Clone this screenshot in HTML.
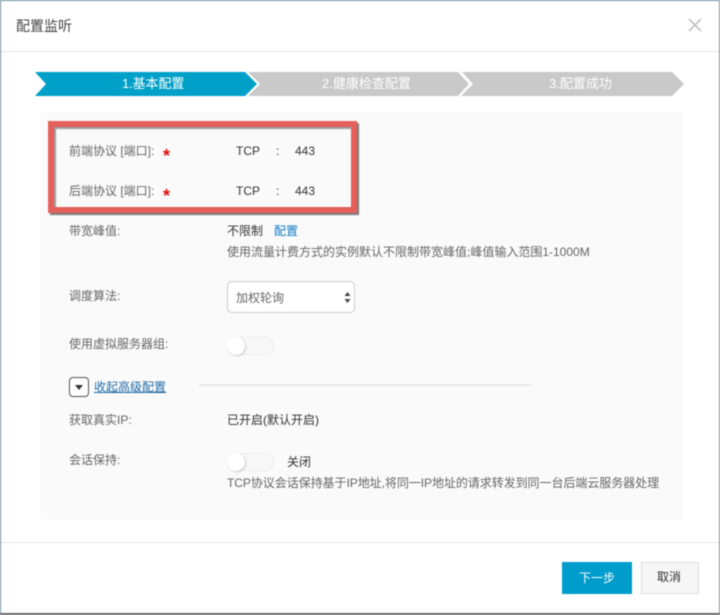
<!DOCTYPE html>
<html lang="zh">
<head>
<meta charset="utf-8">
<title>配置监听</title>
<style>
html,body{margin:0;padding:0;background:#fff}
#p{position:relative;width:720px;height:615px;overflow:hidden;background:#fff;font-family:"Liberation Sans","Noto Sans CJK SC",sans-serif;font-size:12px;color:#333;filter:blur(.4px)}
.t{position:absolute;white-space:nowrap;line-height:16px}
.a{position:absolute}
.l{color:#666;left:69px}
.v{color:#333}
.g{color:#666}
.s{color:#e01010;font-size:18px;font-weight:bold;line-height:20px;font-family:"Liberation Sans",sans-serif}
.sw{position:absolute;width:47px;height:18px;border:1px solid #eee;border-radius:10px;background:#f8f8f8;box-sizing:border-box}
.sw i{position:absolute;left:-1px;top:-1px;width:18px;height:18px;border-radius:50%;background:#fff;box-shadow:1px 1px 2px rgba(0,0,0,.18)}
</style>
</head>
<body>
<div id="p">
<div class="a" style="left:0;top:0;width:720px;height:1px;background:#5f8d9c"></div>
<div class="a" style="left:0;top:0;width:1px;height:615px;background:#6d8b96"></div>
<div class="a" style="right:0;top:0;width:1px;height:615px;background:#7f8f96"></div>
<div class="a" style="left:0;top:613px;width:720px;height:2px;background:#666"></div>
<div class="a" style="left:1px;top:51px;width:718px;height:1px;background:#e5e5e5"></div>
<div class="a" style="left:1px;top:542px;width:718px;height:1px;background:#e5e5e5"></div>
<div class="t" style="left:16px;top:17px;font-size:14px;line-height:18px;color:#444">配置监听</div>
<svg class="a" style="left:688px;top:18px" width="14" height="14" viewBox="0 0 14 14"><path d="M1 1L13 13M13 1L1 13" stroke="#c4c4c4" stroke-width="1.6" fill="none"/></svg>
<svg class="a" style="left:0;top:60px" width="720" height="48" viewBox="0 60 720 48">
<polygon points="35,72 245,72 257,84 245,96 35,96 46,84" fill="#00a0c8"/>
<polygon points="248,72 458,72 469,84 458,96 248,96 260,84" fill="#c9c9c9"/>
<polygon points="462,72 672,72 684,84 672,96 461,96 473,84" fill="#c9c9c9"/>
</svg>
<div class="t" style="left:122px;top:76px;color:#fff;font-size:13px;letter-spacing:-.1px">1.基本配置</div>
<div class="t" style="left:322px;top:76px;color:#fff;font-size:13px">2.健康检查配置</div>
<div class="t" style="left:549px;top:76px;color:#fff;font-size:13px">3.配置成功</div>
<div class="a" style="left:40px;top:112px;width:643px;height:408px;background:#fafafa"></div>
<div class="a" style="left:68px;top:513px;width:604px;height:1px;background:#f6f6f6"></div>
<div class="a" style="left:48px;top:121px;width:309px;height:92px;box-sizing:border-box;border:6.5px solid #e5605a;box-shadow:2px 2px 1px #777,inset 2px 2px 1px rgba(90,90,90,.6)"></div>
<div class="t l" style="top:143px">前端协议 [端口]:</div>
<div class="t s" style="left:163px;top:146px">*</div>
<div class="t v" style="left:236px;top:143px">TCP</div>
<div class="t v" style="left:276px;top:143px">:</div>
<div class="t v" style="left:295px;top:143px">443</div>
<div class="t l" style="top:183px">后端协议 [端口]:</div>
<div class="t s" style="left:163px;top:186px">*</div>
<div class="t v" style="left:236px;top:183px">TCP</div>
<div class="t v" style="left:276px;top:183px">:</div>
<div class="t v" style="left:295px;top:183px">443</div>
<div class="t l" style="top:223px">带宽峰值:</div>
<div class="t v" style="left:227px;top:223px">不限制</div>
<div class="t" style="left:274px;top:223px;color:#0a78c8">配置</div>
<div class="t g" style="left:227px;top:244px">使用流量计费方式的实例默认不限制带宽峰值;峰值输入范围1-1000M</div>
<div class="t l" style="top:288px">调度算法:</div>
<div class="a" style="left:227px;top:281px;width:128px;height:32px;box-sizing:border-box;border:1px solid #ccc;border-radius:5px;background:#fff"></div>
<div class="t g" style="left:236px;top:290px">加权轮询</div>
<svg class="a" style="left:344px;top:292px" width="7" height="11" viewBox="0 0 7 11"><path d="M3.5 0L6.5 4H.5zM3.5 11L.5 7H6.5z" fill="#444"/></svg>
<div class="t l" style="top:336px">使用虚拟服务器组:</div>
<div class="sw" style="left:227px;top:337px"><i></i></div>
<div class="a" style="left:69px;top:377px;width:20px;height:20px;box-sizing:border-box;border:1px solid #555;border-radius:4px;background:#fff"></div>
<svg class="a" style="left:75px;top:385px" width="8" height="5" viewBox="0 0 8 5"><path d="M0 0H8L4 5z" fill="#333"/></svg>
<div class="t" style="left:94px;top:379px;color:#1f6aa5;text-decoration:underline">收起高级配置</div>
<div class="a" style="left:199px;top:384px;width:332px;height:2px;background:#e8e8e8"></div>
<div class="t l" style="top:412px">获取真实IP:</div>
<div class="t v" style="left:227px;top:412px">已开启(默认开启)</div>
<div class="t l" style="top:452px">会话保持:</div>
<div class="sw" style="left:227px;top:453px"><i></i></div>
<div class="t v" style="left:287px;top:454px">关闭</div>
<div class="t g" style="left:227px;top:475px;letter-spacing:-.05px">TCP协议会话保持基于IP地址,将同一IP地址的请求转发到同一台后端云服务器处理</div>
<div class="a" style="left:562px;top:562px;width:70px;height:32px;background:#009ccc"></div>
<div class="t" style="left:579px;top:570px;color:#fff;font-size:12px">下一步</div>
<div class="a" style="left:641px;top:562px;width:58px;height:32px;box-sizing:border-box;border:1px solid #ddd;background:#f6f6f6"></div>
<div class="t" style="left:657px;top:569px;color:#333">取消</div>
</div>
</body>
</html>
